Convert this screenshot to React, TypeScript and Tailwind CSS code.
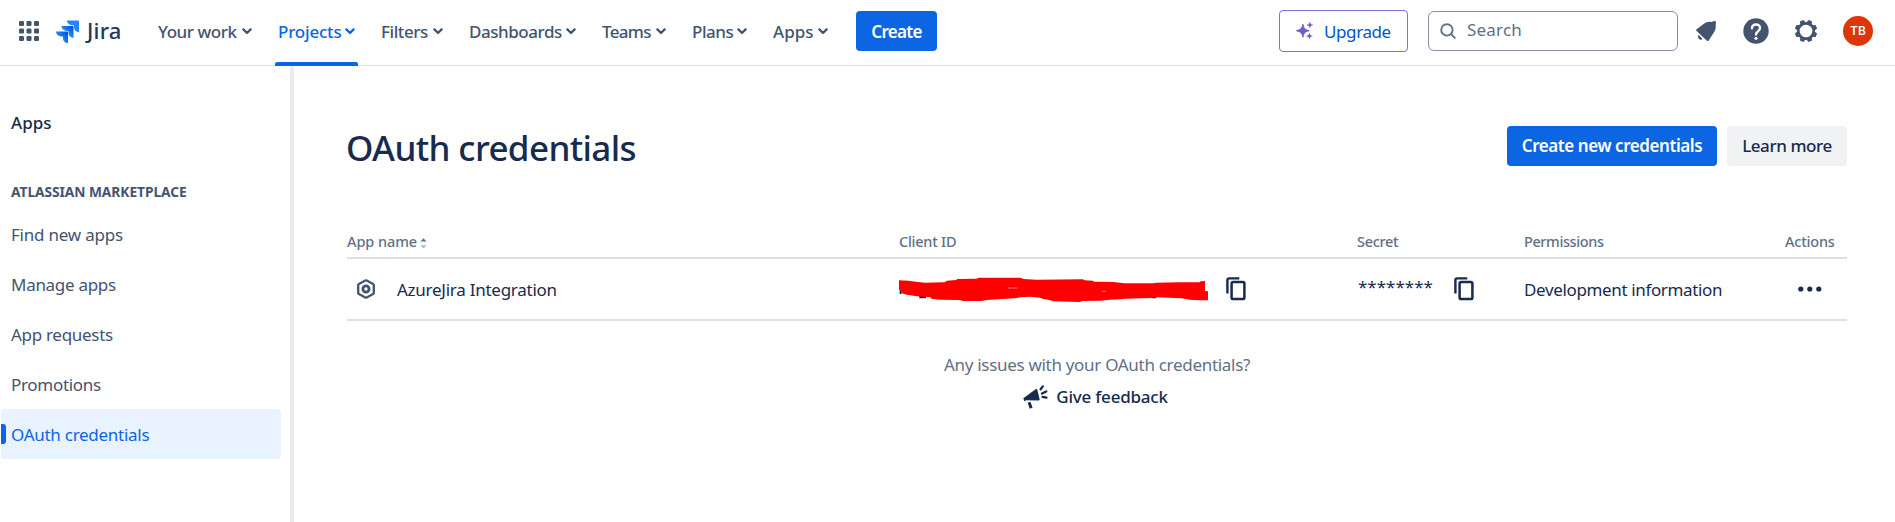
import React from "react";

const navItems = [
  { label: "Your work", item: "w-[120px]", text: "w-[84px] tracking-[-0.45px]" },
  { label: "Projects", item: "w-[103px]", text: "w-[67px] tracking-[-0.2px]", active: true },
  { label: "Filters", item: "w-[88px]", text: "w-[52px] tracking-[-0.43px]" },
  { label: "Dashboards", item: "w-[133px]", text: "w-[97px] tracking-[-0.45px]" },
  { label: "Teams", item: "w-[90px]", text: "w-[54px] tracking-[-0.7px]" },
  { label: "Plans", item: "w-[81px]", text: "w-[45px] tracking-[-0.45px]" },
  { label: "Apps", item: "w-[86px]", text: "w-[45px]" },
];

const sideItems = [
  { label: "Find new apps", tracking: "tracking-[-0.22px]" },
  { label: "Manage apps", tracking: "tracking-[-0.29px]" },
  { label: "App requests", tracking: "tracking-[-0.3px]" },
  { label: "Promotions", tracking: "tracking-[-0.3px]" },
  { label: "OAuth credentials", tracking: "tracking-[-0.27px]", selected: true },
];

function Chevron() {
  return (
    <svg width="10" height="7" viewBox="0 0 10 7" fill="none" className="shrink-0">
      <path d="M1.400 1.400 5 5l3.600-3.600" stroke="currentColor" strokeWidth="2.300" strokeLinecap="round" strokeLinejoin="round" />
    </svg>
  );
}

function AppSwitcher() {
  const cells = [0, 7.5, 15];
  return (
    <svg width="20" height="20" viewBox="0 0 20 20" fill="#44546f" className="shrink-0">
      {cells.map((y) => cells.map((x) => <rect key={`${x}-${y}`} x={x} y={y} width="5" height="5" rx="1.200" />))}
    </svg>
  );
}

function JiraMark() {
  return (
    <svg width="24" height="23" viewBox="0 0 24 23" className="shrink-0">
      <defs>
        <linearGradient id="jiraMid" x1="17" y1="6" x2="11" y2="12" gradientUnits="userSpaceOnUse">
          <stop offset="0.1" stopColor="#0052cc" />
          <stop offset="1" stopColor="#2684ff" />
        </linearGradient>
        <linearGradient id="jiraLow" x1="12" y1="12" x2="5" y2="18" gradientUnits="userSpaceOnUse">
          <stop offset="0.1" stopColor="#0052cc" />
          <stop offset="1" stopColor="#2684ff" />
        </linearGradient>
      </defs>
      <path d="M11 .4h11.3a.7.7 0 0 1 .7.7v11.2a5 5 0 0 1-5-5V5.3h-2A5 5 0 0 1 11 .4Z" fill="#2684ff" />
      <path d="M5.5 6h11.2a.8.8 0 0 1 .8.8v11.1a5 5 0 0 1-5-5V11h-2a5 5 0 0 1-5-5Z" fill="url(#jiraMid)" />
      <path d="M0 11.6h11.2a.8.8 0 0 1 .8.8v10.9a5 5 0 0 1-5-5v-1.8H5a5 5 0 0 1-5-4.9Z" fill="url(#jiraLow)" />
    </svg>
  );
}

function Sparkles() {
  return (
    <svg width="18" height="18" viewBox="0 0 18 18" fill="#6e5dc6" className="shrink-0">
      <path d="M6.900 2.200c.9 4.200 2 5.400 6.300 6.500-4.300 1.100-5.400 2.300-6.300 6.500C6 11 4.800 9.800.4 8.700 4.800 7.600 6 6.400 6.900 2.200Z" stroke="#6e5dc6" strokeWidth="1" strokeLinejoin="round" />
      <path d="M13.900 0c.4 2 1 2.600 3 3-2 .5-2.600 1-3 3-.4-2-1-2.500-3-3 2-.4 2.600-1 3-3Z" stroke="#6e5dc6" strokeWidth=".4" />
      <path d="M13.400 11c.4 2 1 2.600 3 3-2 .5-2.600 1-3 3-.4-2-1-2.500-3-3 2-.4 2.600-1 3-3Z" stroke="#6e5dc6" strokeWidth=".4" />
    </svg>
  );
}

function Bell() {
  return (
    <svg width="20" height="21" viewBox="0 0 20 21" fill="#44546f" className="shrink-0">
      <path d="M.3 8.400 7.600 2.900C10.400.8 13 .3 15.600.9L18.300.1c1-.3 1.700.3 1.700 1.300l-.3 2.500c.3 2.700-.2 5.400-2 7.900l-5 7.700c-.4.7-1.200.8-1.800.2L.4 9.700C0 9.300-.1 8.700.3 8.400Z" />
      <path d="M2.500 13.800 6.700 18c-1.200 1-2.700.9-3.700-.1s-1.300-2.700-.5-4.100Z" />
    </svg>
  );
}

function Help() {
  return (
    <svg width="26" height="26" viewBox="0 0 26 26" className="shrink-0">
      <circle cx="13" cy="13" r="12.700" fill="#44546f" />
      <path d="M9 10.300C9 7.900 10.700 6.500 13 6.500s4 1.500 4 3.600c0 1.700-.9 2.500-2.100 3.300-1.300.8-1.900 1.300-1.900 3" fill="none" stroke="#fff" strokeWidth="2.400" strokeLinecap="round" />
      <circle cx="13" cy="20.300" r="1.600" fill="#fff" />
    </svg>
  );
}

function Gear() {
  const teeth = [22.5, 67.5, 112.5, 157.5, 202.5, 247.5, 292.5, 337.5];
  return (
    <svg width="22" height="22" viewBox="-11 -11 22 22" fill="#44546f" className="shrink-0">
      <circle r="7.700" fill="none" stroke="#44546f" strokeWidth="2.700" />
      {teeth.map((a) => (
        <path key={a} d="M-2.900-7.800-2.100-10.500Q-1.900-11.200-1.200-11.200H1.200Q1.900-11.200 2.100-10.500L2.900-7.800Z" transform={`rotate(${a})`} />
      ))}
    </svg>
  );
}

function Copy() {
  return (
    <svg width="20" height="24" viewBox="0 0 20 24" fill="none" stroke="#172b4d" className="shrink-0">
      <path d="M1.400 16.600V3.100c0-1.100.6-1.700 1.700-1.700H13.300" strokeWidth="2.400" />
      <rect x="5.600" y="5.100" width="12.800" height="17" rx="1.600" strokeWidth="2.500" />
    </svg>
  );
}

function Hexagon() {
  return (
    <svg width="18" height="20" viewBox="0 0 18 20" fill="none" stroke="#44546f" className="shrink-0">
      <path d="M8.300 1.500a1.500 1.500 0 0 1 1.400 0l6.400 3.500a1.300 1.300 0 0 1 .7 1.200v7.600a1.300 1.300 0 0 1-.7 1.200l-6.400 3.500a1.500 1.500 0 0 1-1.400 0L1.900 15a1.300 1.300 0 0 1-.7-1.200V6.200A1.300 1.300 0 0 1 1.900 5Z" strokeWidth="2.300" />
      <circle cx="9" cy="10" r="3.100" strokeWidth="2.800" />
    </svg>
  );
}

function Megaphone() {
  return (
    <svg width="25" height="25" viewBox="0 0 25 25" fill="#172b4d" className="shrink-0">
      <path d="M12.600 4.200c.7-.6 1.500-.3 1.700.5l2.300 9.400c.2.900-.4 1.500-1.300 1.400l-12.300-.3L1.500 16.400.3 13.200l1.400-.9Z" />
      <path d="M6 17.300l2.200 5.800" stroke="#172b4d" strokeWidth="3" />
      <path d="M17.600 4.300 19.800 1.400M19 8.600l4.200-2.200M19.600 11.800l3.800.9" stroke="#172b4d" strokeWidth="2.300" strokeLinecap="round" />
    </svg>
  );
}

function Redaction() {
  return (
    <svg width="310" height="27" viewBox="57 170 930 81" className="block shrink-0">
      <path d="M59 212h6v12h-6ZM118 230h20v7h-20ZM815 232h14v5h-14Z" fill="#172b4d" />
      <path
        d="M57 183 85 184 108 187 134 190 193 189 201 184 228 182 232 179 290 178 295 175 422 175 430 179 470 181 608 180 614 183 638 184 643 187 700 188 733 192 818 192 830 190 900 189 958 189 962 186 975 185 975 215 984 216 984 243 958 243 930 241 905 237 830 234 810 236 735 238 720 240 690 241 660 244 606 245 600 248 520 246 508 242 490 239 480 235 450 232 420 234 405 237 365 239 320 242 305 245 250 245 240 242 180 241 154 238 152 234 110 231 80 226 66 222 64 212 57 211Z"
        fill="#f00"
      />
      <path d="M385 206h10M398 206h14" stroke="#e9a0b0" strokeWidth="2.500" />
      <path d="M666 216h12" stroke="#ff7070" strokeWidth="3" />
    </svg>
  );
}

export default function App() {
  return (
    <div className="flex h-[522px] w-full flex-col overflow-hidden bg-white font-['Noto_Sans','Open_Sans',sans-serif] text-[17px] text-[#172b4d]">
      <header className="flex h-[66px] shrink-0 border-b border-[#dcdfe4] pl-[19px] text-[#44546f]">
        <div className="flex h-[62px] w-[136px] shrink-0 items-center">
          <AppSwitcher />
          <div className="ml-[17px] flex items-center">
            <JiraMark />
            <span className="mb-[3px] ml-[7px] text-[22px] leading-[30px] font-medium tracking-[0.2px] text-[#253858]">Jira</span>
          </div>
        </div>
        <nav className="flex h-[66px] shrink-0 font-medium">
          {navItems.map((n) => (
            <div key={n.label} className={`${n.item} shrink-0`}>
              <div className={`flex h-[66px] w-fit flex-col px-[3px] ${n.active ? "text-[#0c66e4]" : ""}`}>
                <div className="flex h-[62px] items-center">
                  <span className={`${n.text} pt-[2px] whitespace-nowrap`}>{n.label}</span>
                  <Chevron />
                </div>
                {n.active && <div className="-mx-[3px] h-1 rounded-t-[2px] bg-[#0c66e4]" />}
              </div>
            </div>
          ))}
        </nav>
        <div className="flex h-[62px] grow items-center">
          <button className="flex h-10 w-[81px] items-center justify-center rounded-[4px] bg-[#0c66e4] pt-[2px] font-semibold tracking-[-0.68px] text-white">Create</button>
          <button className="ml-[342px] flex h-[42px] w-[129px] items-center rounded-[4px] border border-[#8270db] pl-4 tracking-[-0.4px] text-[#0055cc]">
            <Sparkles />
            <span className="ml-[10px] pt-[2px]">Upgrade</span>
          </button>
          <div className="ml-5 flex h-10 w-[250px] items-center rounded-[6px] border border-[#8590a2] pl-[11px] text-[#626f86]">
            <svg width="16" height="16" viewBox="0 0 16 16" fill="none" stroke="#626f86" strokeWidth="1.900" strokeLinecap="round">
              <circle cx="6.900" cy="6.900" r="5.700" />
              <path d="m11.200 11.200 3.600 3.600" />
            </svg>
            <span className="mb-[2px] ml-[11px] tracking-[0.2px]">Search</span>
          </div>
          <div className="ml-[18px] flex items-center">
            <Bell />
            <div className="ml-[27px]"><Help /></div>
            <div className="ml-[26px]"><Gear /></div>
            <div className="ml-[26px] flex size-[30px] items-center justify-center rounded-full bg-[#de350b] font-[Inter] text-[12px] font-semibold text-white">TB</div>
          </div>
        </div>
      </header>

      <div className="flex grow">
        <aside className="h-[456px] w-[290px] shrink-0 pt-[45px] pl-px">
          <div className="pl-[10px] text-[17px] leading-6 font-medium">Apps</div>
          <div className="mt-[47px] pl-[10px] text-[13.750px] leading-[20px] font-bold tracking-[-0.05px] text-[#44546f]">ATLASSIAN MARKETPLACE</div>
          <ul className="mt-[7px] w-[280px]">
            {sideItems.map((s) => (
              <li key={s.label} className={`flex h-[50px] items-center ${s.selected ? "rounded-[4px] bg-[#e9f2ff] text-[#0c66e4]" : "text-[#44546f]"}`}>
                <span className={`h-5 w-[5px] rounded-r-[3px] ${s.selected ? "bg-[#0c66e4]" : ""}`} />
                <span className={`ml-[5px] pt-[2px] ${s.tracking}`}>{s.label}</span>
              </li>
            ))}
          </ul>
        </aside>
        <div className="w-1 shrink-0 bg-[#ebecf0]" />

        <main className="w-[1553px] shrink-0 pl-[53px]">
          <div className="flex h-[100px] items-end justify-between">
            <h1 className="-mb-[4px] -ml-[1px] text-[35px] leading-[44px] font-medium tracking-[-0.62px]">OAuth credentials</h1>
            <div className="flex gap-[10px]">
              <button className="h-10 w-[210px] rounded-[4px] bg-[#0c66e4] font-semibold tracking-[-0.43px] text-white">Create new credentials</button>
              <button className="h-10 w-[120px] rounded-[4px] bg-[#f1f2f4] font-medium tracking-[-0.42px]">Learn more</button>
            </div>
          </div>

          <div className="mt-[63px] flex h-[30px] border-b-2 border-[#dcdfe4] text-[14.500px] leading-[24px] font-medium text-[#626f86]">
            <div className="flex w-[552px] items-center pb-[4px] tracking-[-0.08px]">
              App name
              <svg width="7" height="11" viewBox="0 0 7 11" className="ml-[3px] mt-1">
                <path d="M.4 3.500 3.500.2 6.600 3.500Z" fill="#626f86" />
                <path d="M.4 7.300H6.600L3.500 10.600Z" fill="#b3b9c4" />
              </svg>
            </div>
            <div className="w-[458px] tracking-[-0.25px]">Client ID</div>
            <div className="w-[167px] tracking-[-0.3px]">Secret</div>
            <div className="w-[261px] tracking-[-0.4px]">Permissions</div>
            <div className="tracking-[-0.2px]">Actions</div>
          </div>
          <div className="flex h-[62px] items-center border-b-2 border-[#dcdfe4]">
            <div className="flex w-[552px] items-center pl-[10px]">
              <Hexagon />
              <span className="mt-[2px] ml-[22px] tracking-[-0.26px]">AzureJira Integration</span>
            </div>
            <div className="flex w-[458px] items-center">
              <Redaction />
              <div className="ml-[17px]"><Copy /></div>
            </div>
            <div className="flex w-[167px] items-center">
              <span className="mb-[5px] w-[97px] pl-px">********</span>
              <Copy />
            </div>
            <div className="mt-[2px] w-[274px] tracking-[-0.36px]">Development information</div>
            <svg width="24" height="6" viewBox="0 0 24 6" fill="#172b4d">
              <circle cx="2.800" cy="3" r="2.600" />
              <circle cx="11.800" cy="3" r="2.600" />
              <circle cx="20.800" cy="3" r="2.600" />
            </svg>
          </div>

          <div className="mt-[32px] flex flex-col items-center">
            <p className="leading-6 tracking-[-0.3px] text-[#626f86]">Any issues with your OAuth credentials?</p>
            <div className="mt-2 mr-[3px] flex h-6 items-center">
              <Megaphone />
              <span className="ml-[8px] leading-6 font-medium tracking-[-0.22px]">Give feedback</span>
            </div>
          </div>
        </main>
      </div>
    </div>
  );
}
